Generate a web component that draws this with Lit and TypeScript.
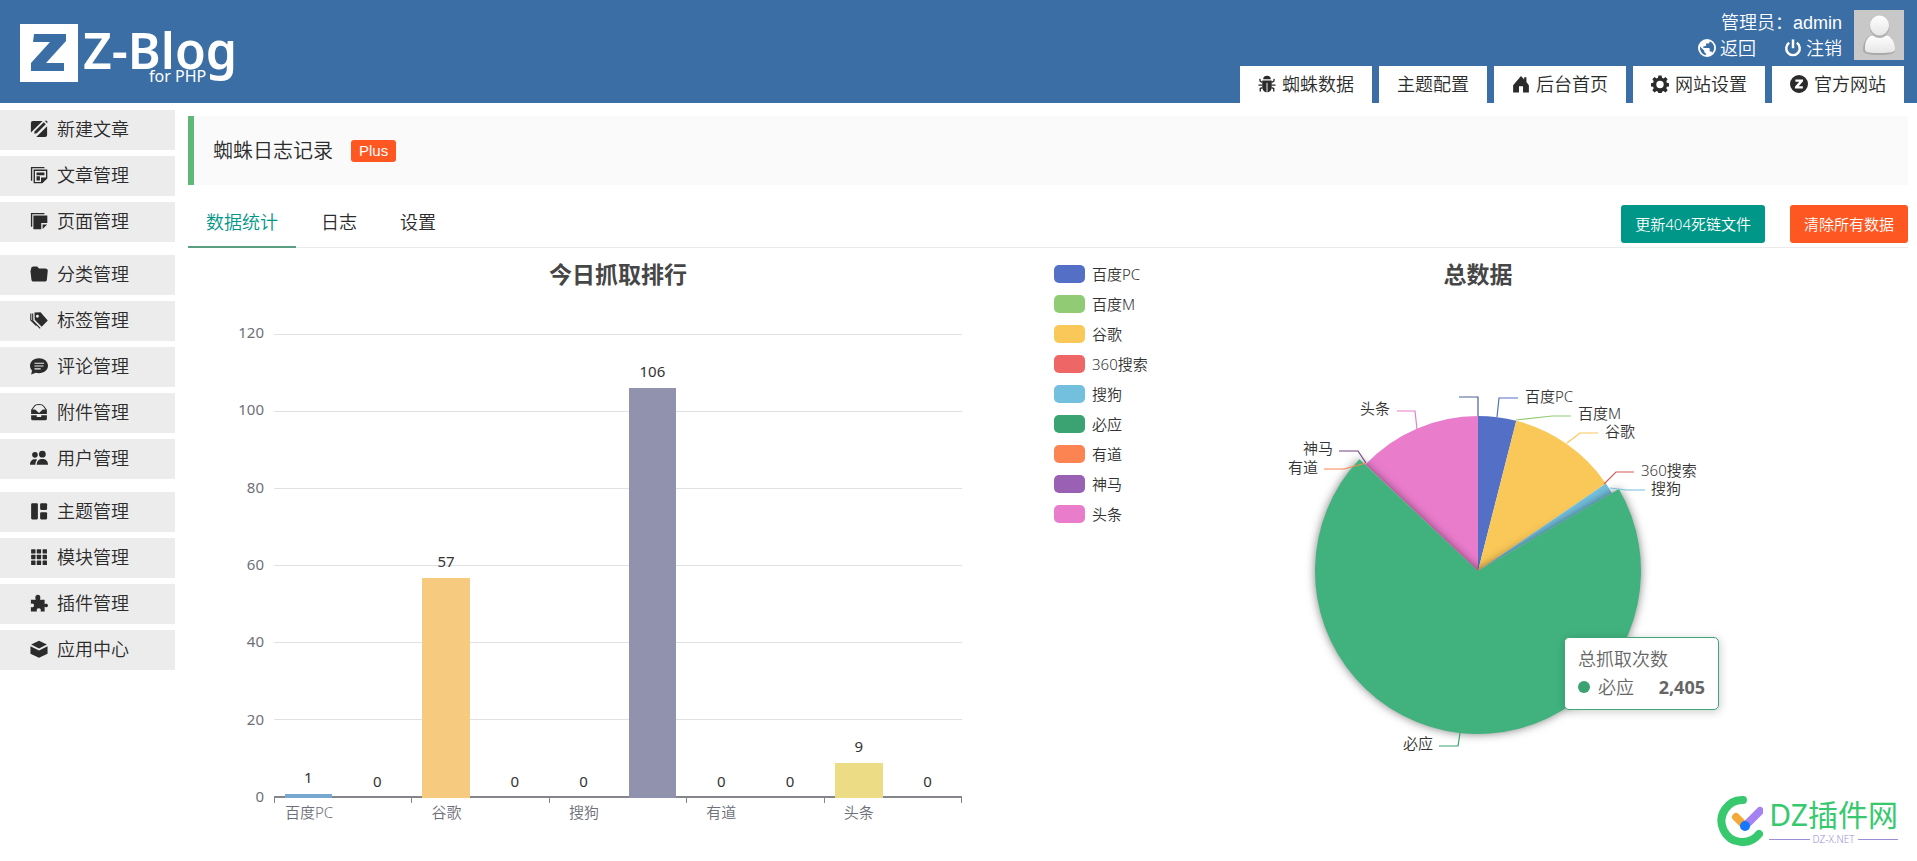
import { LitElement, html, svg, css, nothing } from "lit";
import { customElement } from "lit/decorators.js";

const glyphs: Record<string, unknown> = {
  edit: svg`<path d="M2.600.8h8.600L.8 11.200V2.600A1.800 1.800 0 0 1 2.600.8zM15.200 5.600v7.800a1.800 1.800 0 0 1-1.800 1.800H5.600z"/><path d="M12.200 2 14 3.800 6 11.800 3.800 12.200 4.200 10z"/><path d="M13.200.8 14.400.4 15.600 1.600 15.200 2.800z"/>`,
  article: svg`<path d="M.8.8h12v1.200H2v11H.8z"/><path fill-rule="evenodd" d="M3.200 3.200h12.200v8L11 15.400H3.200zM4.400 4.400v9.800h5.400v-4H14.200V4.400z"/><path d="M5.800 5.800h7v2.400h-7zM5.800 9.200h3v3.600h-3z"/>`,
  page: svg`<path d="M.8.8h12v1.200H2v11H.8z"/><path d="M3 3h12.400v6.800H10v5.600H3z"/><path d="M11.200 11h4l-4 4z"/>`,
  folder: svg`<path d="M1 3.400C1 2 2 1.400 3 1.400h3.400l1.600 1.800h5.600c1.200 0 2.200.6 2.200 2L15 13c-.1 1-.8 1.600-1.800 1.600H3c-1 0-1.600-.6-1.700-1.600L.4 5.600z"/>`,
  tag: svg`<path fill-rule="evenodd" d="M4 1.400 9.400 1.200 15.800 8.400 10.400 14 4.200 7.800zM6.600 3.400a1.300 1.300 0 1 0 0 2.600 1.300 1.300 0 0 0 0-2.600z"/><path d="M2.400 2.200v6.400l6.600 6.800" fill="none" stroke="currentColor"/><path d="M.7 2.200V8l5 5" fill="none" stroke="currentColor"/>`,
  comment: svg`<path fill-rule="evenodd" d="M8 1.200c4.400 0 8 2.800 8 6.600s-3.600 6.600-8 6.600c-1 0-2-.1-2.800-.4L1 15.600l.8-3.600C.6 10.800 0 9.400 0 7.800 0 4 3.600 1.200 8 1.200zM4 5v1h8.500V5zm0 2.500v1h8v-1zM4 10v1h5.500v-1z"/>`,
  tray: svg`<path d="M1.600 6 4 2.600C5 1 11 1 12 2.600L14.400 6" fill="none" stroke="currentColor" stroke-width=".9"/><path d="M1 5.800h3.600L8 8.800l3.400-3H15v4H1zM1 10.800h5v1.600h4v-1.600h5V14a1.400 1.400 0 0 1-1.400 1.400H2.400A1.400 1.400 0 0 1 1 14z"/>`,
  users: svg`<circle cx="4.400" cy="5.200" r="2.500"/><circle cx="11" cy="4.600" r="3"/><path d="M0 14c0-3.400 1.800-5 4.400-5 .8 0 1.400.1 2 .5C5.200 10.600 4.800 12.200 4.800 14zM6 14c0-3.600 2-5.200 5-5.200s5 1.600 5 5.200z"/>`,
  theme: svg`<rect x="1" y="1" width="6" height="14.500" rx="1"/><rect x="9" y="1" width="6.200" height="6" rx="1"/><rect x="9" y="9" width="6.200" height="6.500" rx="1"/>`,
  grid: svg`${[1, 6, 11.200].map((x) => [1, 6, 11.200].map((y) => svg`<rect x=${x} y=${y} width="3.900" height="3.900" rx=".5"/>`))}`,
  puzzle: svg`<path d="M.8 5h4.400C4.400 3.400 4.600.6 7 .6s2.600 2.800 1.800 4.400H13v4c1.200-.8 3-.4 3 1.200s-1.800 2-3 1.200v4.200H9.400c.6-1.600.2-3-1.600-3s-2.200 1.400-1.600 3H.8v-4c1.400.6 2.800 0 2.800-1.400S2.200 8 .8 8.800z"/>`,
  box: svg`<path d="M8 .6 15 4 8 7.600 1 4zM.4 5.600 8 9.400l7.600-3.800v6.600L8 15.800.4 12.200z"/>`,
  bug: svg`<path d="M4.600 3.800a3.400 3.200 0 0 1 6.800 0zM3.800 4.800h8.400v6.400a4.200 4.200 0 0 1-8.400 0z"/><path d="M1.600 3.400 2 5.600 4 6.600M14.400 3.400 14 5.600l-2 1M.4 9H4M12 9h3.600M4 11.200 2 12v2.600M12 11.200l2 .8v2.600" fill="none" stroke="currentColor" stroke-width="1.200"/><path d="M8 7v8" stroke="#fff" stroke-width=".8"/>`,
  home: svg`<path d="M8 .8 10.800 4V2h2v4.200L15 9v6.600H9.800V10H6.200v5.600H1V9z"/>`,
  gear: svg`<path fill-rule="evenodd" d="M6.600.4h2.800l.4 2.100 1.300.5L12.900 1.800l1.900 2-1.200 1.800.5 1.300 2 .4v2.800l-2 .4-.5 1.200 1.200 1.800-1.900 2-1.800-1.200-1.300.5-.4 2H6.600l-.4-2-1.300-.5-1.800 1.200-1.900-2 1.200-1.800-.5-1.200-2-.4V7.300l2-.4.5-1.300-1.200-1.800 1.900-2L4.900 3l1.300-.5zM8 5.200a3.300 3.300 0 1 0 0 6.600 3.300 3.300 0 0 0 0-6.600z"/>`,
  zed: svg`<path fill-rule="evenodd" d="M8 0a8 8 0 1 1 0 16A8 8 0 0 1 8 0zM4.800 4v2h3.400L4.400 10.400V12h7v-2H7.800l3.800-4.400V4z"/>`,
  globe: svg`<path fill-rule="evenodd" d="M8 0a8 8 0 1 1 0 16A8 8 0 0 1 8 0zM7.200 14.300v-1.500c-.9 0-1.600-.7-1.600-1.600v-.8L1.800 6.600C1.400 10.400 3.600 13.800 7.200 14.300zM12.700 12.300c2.800-3.200 2.200-8-2.300-10.200v.3c0 .9-.7 1.600-1.600 1.600H7.200v1.600c0 .4-.4.8-.8.800H4.800V8h4.800c.4 0 .8.4.8.800v2.400h.8c.7 0 1.300.5 1.500 1.100z"/>`,
  power: svg`<path d="M4.600 3.400a6 6 0 1 0 6.800 0" fill="none" stroke="currentColor" stroke-width="2.200"/><path d="M8 .4v7.800" stroke="currentColor" stroke-width="2.200"/>`,
};
const icon = (name: string) => html`<svg class="icon" viewBox="0 0 16 16" aria-hidden="true">${glyphs[name]}</svg>`;

const menu: [string, string][][] = [
  [["edit", "新建文章"], ["article", "文章管理"], ["page", "页面管理"]],
  [["folder", "分类管理"], ["tag", "标签管理"], ["comment", "评论管理"], ["tray", "附件管理"], ["users", "用户管理"]],
  [["theme", "主题管理"], ["grid", "模块管理"], ["puzzle", "插件管理"], ["box", "应用中心"]],
];
const topNav: [string, string][] = [["bug", "蜘蛛数据"], ["", "主题配置"], ["home", "后台首页"], ["gear", "网站设置"], ["zed", "官方网站"]];

@customElement("bar-chart")
export class BarChart extends LitElement {
  static styles = css`
    :host { display: grid; grid-template-columns: 10% 80% 10%; grid-template-rows: 22px 49px 464px auto; color: #464646; font-size: 15px; line-height: 20px; padding-top: 15px; }
    .title { grid-column: 1 / 4; margin: 0; text-align: center; font-size: 23px; line-height: 22px; font-weight: 700; }
    .scale { grid-area: 3 / 1; display: flex; flex-direction: column; justify-content: space-between; margin: -12px 10px -8px 0; text-align: right; color: #6e7079; font-weight: 400; }
    .plot { grid-area: 3 / 2; display: grid; grid-template-columns: repeat(10, 1fr); }
    .lines { grid-area: 3 / 2; display: flex; flex-direction: column; border-bottom: 2px solid #85868c; }
    .line { flex: 1; border-top: 1px solid #dfe1e5; }
    .slot { display: flex; flex-direction: column; justify-content: flex-end; align-items: center; color: #333; z-index: 1; font-weight: 400; }
    .value { line-height: 20px; margin-bottom: 7px; }
    .bar { width: 69%; }
    .names { grid-area: 4 / 2; display: grid; grid-template-columns: repeat(5, 1fr); border-right: 1px solid #85868c; height: 5px; }
    .name { border-left: 1px solid #85868c; color: #6e7079; height: 5px; }
    .name span { display: block; width: 50%; padding-top: 4px; text-align: center; white-space: nowrap; }
  `;
  values = [1, 0, 57, 0, 0, 106, 0, 0, 9, 0];
  colors = ["#77a9d0", "", "#f7cb7f", "", "", "#9192ad", "", "", "#ecdc85", ""];
  names = ["百度PC", "谷歌", "搜狗", "有道", "头条"];
  render() {
    return html`
      <h2 class="title">今日抓取排行</h2>
      <div class="scale">${[120, 100, 80, 60, 40, 20, 0].map((v) => html`<span>${v}</span>`)}</div>
      <div class="lines">${[1, 2, 3, 4, 5, 6].map(() => html`<div class="line"></div>`)}</div>
      <div class="plot">
        ${this.values.map((v, i) => html`<div class="slot"><span class="value">${v}</span>
          <div class="bar" style="height:${(v / 120) * 100}%;background:${this.colors[i] || "none"}"></div></div>`)}
      </div>
      <div class="names">${this.names.map((n) => html`<div class="name"><span>${n}</span></div>`)}</div>`;
  }
}

interface Callout { points: string; color: string; name: string; x: number; y: number; end?: boolean }

@customElement("pie-chart")
export class PieChart extends LitElement {
  static styles = css`
    :host { display: block; position: relative; color: #333; font-size: 15px; }
    .title { margin: 0; padding-top: 15px; text-align: center; font-size: 23px; line-height: 22px; font-weight: 700; color: #464646; }
    .legend { position: absolute; top: 11px; left: 6px; margin: 0; padding: 0; list-style: none; }
    .legend li { display: flex; align-items: center; gap: 7px; height: 30px; }
    .swatch { width: 31px; height: 18px; border-radius: 5px; }
    .pie { display: block; width: 100%; overflow: visible; }
    .callout { fill: none; stroke-width: 1.200; }
    .label { fill: #333; font-size: 15px; }
    .active { filter: drop-shadow(0 0 5px rgba(0, 0, 0, 0.5)); }
    .tip { position: absolute; left: 60%; top: 389px; box-sizing: border-box; width: 155px; padding: 7px 13px 8px; border: 1px solid #40a577; border-radius: 5px; background: #fff; box-shadow: 1px 2px 10px rgba(0, 0, 0, 0.2); color: #666; font-size: 18px; line-height: 28px; }
    .row { display: flex; align-items: center; }
    .dot { width: 12px; height: 12px; border-radius: 50%; background: #3ba272; margin-right: 8px; }
    .row b { margin-left: auto; font-weight: 700; }
  `;
  legend: [string, string][] = [
    ["百度PC", "#5470c6"], ["百度M", "#91cc75"], ["谷歌", "#fac858"], ["360搜索", "#ee6666"], ["搜狗", "#73c0de"],
    ["必应", "#3ba272"], ["有道", "#fc8452"], ["神马", "#9a60b4"], ["头条", "#ea7ccc"],
  ];
  callouts: Callout[] = [
    { points: "430,128 430,109 411,109", color: "#4a6098", name: "", x: 0, y: 0 },
    { points: "449,129 451,110 470,110", color: "#5470c6", name: "百度PC", x: 477, y: 109 },
    { points: "468,132 504,128 523,128", color: "#91cc75", name: "百度M", x: 530, y: 126 },
    { points: "519,155 532,145 550,145", color: "#fac858", name: "谷歌", x: 557, y: 144 },
    { points: "556,196 568,184 586,184", color: "#d75b5b", name: "360搜索", x: 593, y: 183 },
    { points: "562,200 578,202 597,202", color: "#73c0de", name: "搜狗", x: 603, y: 201 },
    { points: "412,445 410,458 391,458", color: "#3ba272", name: "必应", x: 385, y: 456, end: true },
    { points: "318,175 296,181 276,181", color: "#fc8452", name: "有道", x: 270, y: 180, end: true },
    { points: "318,175 310,163 291,163", color: "#6d4480", name: "神马", x: 285, y: 161, end: true },
    { points: "369,141 367,123 349,123", color: "#ea7ccc", name: "头条", x: 342, y: 121, end: true },
  ];
  slice(from: number, to: number, r: number, color: string, active = false) {
    const at = (deg: number) => {
      const a = (deg * Math.PI) / 180;
      return `${430 + r * Math.sin(a)} ${283 - r * Math.cos(a)}`;
    };
    return svg`<path class=${active ? "active" : "slice"} fill=${color} d="M430 283L${at(from)}A${r} ${r} 0 ${to - from > 180 ? 1 : 0} 1 ${at(to)}Z"/>`;
  }
  render() {
    return html`
      <h2 class="title">总数据</h2>
      <ul class="legend">${this.legend.map(([n, c]) => html`<li><span class="swatch" style="background:${c}"></span>${n}</li>`)}</ul>
      <svg class="pie" viewBox="0 -3 860 500" role="img" aria-label="总数据">
        ${this.slice(0, 14.3, 155, "#5470c6")}${this.slice(14.3, 55.6, 155, "#fac858")}
        ${this.slice(55.6, 59.8, 155, "#73c0de")}${this.slice(313.400, 360, 155, "#ea7ccc")}
        ${this.slice(59.8, 313.300, 163, "#41b27d", true)}
        ${this.callouts.map((c) => svg`<polyline class="callout" points=${c.points} stroke=${c.color}/>
          ${c.name ? svg`<text class="label" x=${c.x} y=${c.y + 5} text-anchor=${c.end ? "end" : "start"}>${c.name}</text>` : nothing}`)}
      </svg>
      <div class="tip" role="tooltip"><div>总抓取次数</div><div class="row"><span class="dot"></span>必应<b>2,405</b></div></div>`;
  }
}

@customElement("app-root")
export class AppRoot extends LitElement {
  static styles = css`
    :host { display: block; min-height: 100vh; position: relative; background: #fff; color: #2b2b2b; font: 350 18px/24px "Noto Sans", "Noto Sans CJK SC", sans-serif; }
    a { color: inherit; text-decoration: none; }
    .icon { width: 18px; height: 18px; fill: currentColor; flex: none; }
    .header { display: flex; justify-content: space-between; height: 103px; background: #3a6ea5; color: #fff; padding: 0 13px 0 20px; }
    .logo { display: flex; gap: 5px; margin-top: 24px; height: 58px; }
    .mark { width: 58px; height: 58px; }
    .word { font: 600 50px/52px "Noto Sans", sans-serif; display: flex; flex-direction: column; }
    .small { font: 400 16px/16px "Noto Sans", sans-serif; margin: -8px 0 0 66px; }
    .right { display: flex; flex-direction: column; justify-content: space-between; align-items: flex-end; }
    .account { display: flex; gap: 12px; margin-top: 10px; text-align: right; }
    .who { font-family: "Liberation Sans", "Noto Sans CJK SC", sans-serif; line-height: 26px; }
    .links { display: flex; justify-content: flex-end; gap: 28px; }
    .links a { display: flex; align-items: center; gap: 4px; }
    .avatar { width: 50px; height: 50px; background: #c8c8c8; }
    .nav { display: flex; gap: 7px; }
    .nav a { display: flex; align-items: center; gap: 6px; box-sizing: border-box; height: 37px; padding: 0 18px 2px; background: #fff; color: #2b2b2b; }
    .body { display: flex; gap: 13px; }
    .side { width: 175px; flex: none; display: flex; flex-direction: column; gap: 13px; padding-top: 7px; }
    .group { display: flex; flex-direction: column; gap: 6px; }
    .group a { display: flex; align-items: center; gap: 9px; box-sizing: border-box; height: 40px; padding: 0 0 2px 30px; background: #ececec; }
    .main { flex: 1; min-width: 0; padding: 13px 9px 0 0; }
    .banner { display: flex; align-items: center; gap: 18px; height: 69px; border-left: 6px solid #5fb878; background: #fafafa; padding-left: 19px; }
    .heading { margin: 0; font-size: 20px; line-height: 28px; font-weight: 350; }
    .badge { background: #ff5722; color: #fff; border-radius: 3px; padding: 0 8px; font: 400 15px/22px "Liberation Sans", sans-serif; }
    .tabs { display: flex; align-items: flex-end; gap: 7px; height: 62px; border-bottom: 1px solid #ebebeb; }
    .tab { font: inherit; color: inherit; background: none; border: 0; border-bottom: 2px solid transparent; padding: 0 18px; height: 50px; margin-bottom: -1px; }
    .on { color: #009688; border-color: #5b9f83; }
    .actions { margin: 0 0 4px auto; display: flex; gap: 25px; }
    .btn { font: inherit; font-size: 15px; height: 38px; padding: 0 14px; border: 0; border-radius: 3px; color: #fff; background: #009688; }
    .danger { background: #ff5722; }
    .charts { display: grid; grid-template-columns: 1fr 1fr; }
    .brand { position: absolute; right: 19px; bottom: 15px; display: flex; align-items: center; gap: 6px; color: #38c96f; }
    .ring { width: 46px; height: 50px; }
    .site { font-size: 30px; line-height: 36px; font-weight: 400; }
    .domain { display: flex; align-items: center; gap: 3px; font-size: 10px; line-height: 12px; color: #9d8fd6; }
    .domain::before, .domain::after { content: ""; flex: 1; border-top: 1px solid #9d8fd6; }
  `;
  render() {
    return html`
      <header class="header">
        <a class="logo" href="#">
          <svg class="mark" viewBox="0 0 58 58" aria-hidden="true"><path fill="#fff" d="M0 0h58v58H0z"/><path fill="#3a6ea5" d="M14 10h32v7L26 39h18v8H11v-8L30 18H13z"/></svg>
          <span class="word">Z-Blog<span class="small">for PHP</span></span>
        </a>
        <div class="right">
          <div class="account">
            <div><div class="who">管理员：admin</div>
              <div class="links"><a href="#">${icon("globe")}返回</a><a href="#">${icon("power")}注销</a></div></div>
            <svg class="avatar" viewBox="0 0 50 50" role="img" aria-label="admin">
              <defs><linearGradient id="g" x2="0" y2="1"><stop offset="0" stop-color="#fff"/><stop offset="1" stop-color="#e6e6e6"/></linearGradient></defs>
              <path d="M14 27c3-3 19-3 22 0 4 4 5 9 5 13 0 3-4 5-16 5S9 43 9 40c0-4 1-9 5-13z" fill="#aaa"/>
              <path d="M15 27c3-3 18-3 21 0 4 4 5 8 5 12 0 3-4 4-16 4s-14-1-14-4c0-4 0-8 4-12z" fill="url(#g)"/>
              <ellipse cx="25.500" cy="17" rx="10" ry="11" fill="#b2b2b2"/><ellipse cx="25.500" cy="15.500" rx="9.500" ry="10" fill="url(#g)"/>
            </svg>
          </div>
          <nav class="nav">${topNav.map(([i, t]) => html`<a href="#">${i ? icon(i) : nothing}${t}</a>`)}</nav>
        </div>
      </header>
      <div class="body">
        <nav class="side">${menu.map((g) => html`<div class="group">${g.map(([i, t]) => html`<a href="#">${icon(i)}${t}</a>`)}</div>`)}</nav>
        <main class="main">
          <div class="banner"><h1 class="heading">蜘蛛日志记录</h1><span class="badge">Plus</span></div>
          <div class="tabs">
            <button class="tab on">数据统计</button><button class="tab">日志</button><button class="tab">设置</button>
            <div class="actions"><button class="btn">更新404死链文件</button><button class="btn danger">清除所有数据</button></div>
          </div>
          <div class="charts"><bar-chart></bar-chart><pie-chart></pie-chart></div>
        </main>
      </div>
      <div class="brand">
        <svg class="ring" viewBox="0 0 46 50" aria-hidden="true">
          <path d="M26 4A21 21 0 1 0 42 38" fill="none" stroke="#38c96f" stroke-width="8" stroke-linecap="round"/>
          <path d="M19 21l8 8" stroke="#f6a93b" stroke-width="8" stroke-linecap="round"/><path d="M28 30 43 15" stroke="#a582f4" stroke-width="8" stroke-linecap="round"/><circle cx="28" cy="30" r="5" fill="#1677ff"/>
        </svg>
        <div><div class="site">DZ插件网</div><div class="domain">DZ-X.NET</div></div>
      </div>`;
  }
}
